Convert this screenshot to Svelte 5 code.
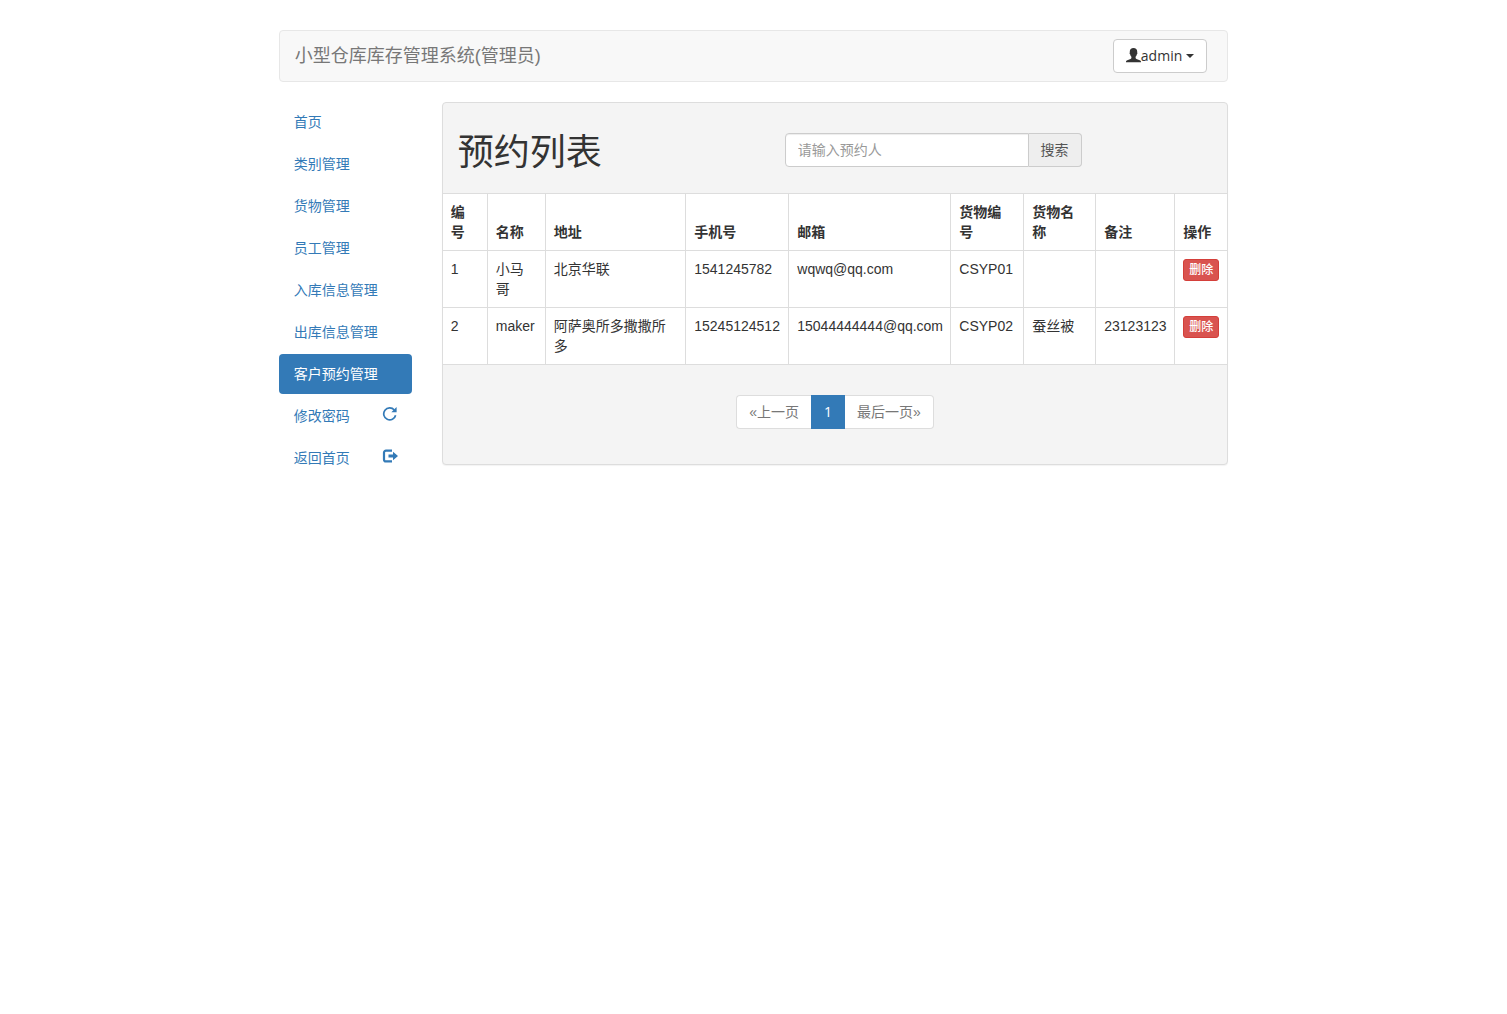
<script lang="ts">
	type Reservation = {
		id: number
		name: string
		address: string
		phone: string
		email: string
		goodsNo: string
		goodsName: string
		remark: string
	}

	const menu = [
		{ label: '首页' },
		{ label: '类别管理' },
		{ label: '货物管理' },
		{ label: '员工管理' },
		{ label: '入库信息管理' },
		{ label: '出库信息管理' },
		{ label: '客户预约管理', active: true },
		{ label: '修改密码', icon: 'refresh' },
		{ label: '返回首页', icon: 'logout' },
	]

	const columns = [
		{ key: 'id', title: '编号' },
		{ key: 'name', title: '名称' },
		{ key: 'address', title: '地址' },
		{ key: 'phone', title: '手机号' },
		{ key: 'email', title: '邮箱' },
		{ key: 'goods-no', title: '货物编号' },
		{ key: 'goods-name', title: '货物名称' },
		{ key: 'remark', title: '备注' },
		{ key: 'action', title: '操作' },
	]

	let rows = $state<Reservation[]>([
		{
			id: 1,
			name: '小马哥',
			address: '北京华联',
			phone: '1541245782',
			email: 'wqwq@qq.com',
			goodsNo: 'CSYP01',
			goodsName: '',
			remark: '',
		},
		{
			id: 2,
			name: 'maker',
			address: '阿萨奥所多撒撒所多',
			phone: '15245124512',
			email: '15044444444@qq.com',
			goodsNo: 'CSYP02',
			goodsName: '蚕丝被',
			remark: '23123123',
		},
	])
	let keyword = $state('')

	function remove(id: number) {
		rows = rows.filter((r) => r.id !== id)
	}
</script>

<div class="container">
	<header class="navbar">
		<span class="brand">小型仓库库存管理系统(管理员)</span>
		<button type="button" class="user-btn">
			<svg width="15" height="16" viewBox="0 0 15 16" aria-hidden="true">
				<path
					d="M7.500 0C5.200 0 3.800 1.300 3.800 3.500v1c-.4.4-.2 1.500.3 1.800.2 1.100.7 2 1.300 2.500v1c0 .6-.3.9-.9 1.200l-3.200 1.300C.4 12.700 0 13.100 0 13.800v.4h15v-.4c0-.7-.4-1.100-1.300-1.500L10.500 11c-.6-.3-.9-.6-.9-1.200v-1c.6-.5 1.100-1.400 1.300-2.500.5-.3.7-1.400.3-1.800v-1C11.200 1.300 9.800 0 7.500 0z"
				/>
			</svg>admin
			<span class="caret"></span>
		</button>
	</header>

	<div class="layout">
		<nav class="sidebar">
			{#each menu as item}
				<a href="#top" class:active={item.active}>
					{item.label}
					{#if item.icon === 'refresh'}
						<svg width="16" height="14" viewBox="0 0 16 14" aria-hidden="true">
							<path
								d="M12.300 3A6 6 0 1 0 13.600 8.200"
								fill="none"
								stroke="currentColor"
								stroke-width="1.700"
							/>
							<path d="M14.600 0v5.300H9.300z" />
						</svg>
					{:else if item.icon === 'logout'}
						<svg width="16" height="14" viewBox="0 0 16 14" aria-hidden="true">
							<path
								d="M10 1.600H4A2 2 0 0 0 2 3.600v6.800a2 2 0 0 0 2 2h6"
								fill="none"
								stroke="currentColor"
								stroke-width="2.200"
							/>
							<path d="M6.500 5.500H11V2.800L16 7l-5 4.200V8.500H6.500z" />
						</svg>
					{/if}
				</a>
			{/each}
		</nav>

		<main class="panel">
			<div class="panel-head">
				<h1>预约列表</h1>
				<form class="search" onsubmit={(e) => e.preventDefault()}>
					<input
						type="text"
						aria-label="预约人"
						placeholder="请输入预约人"
						bind:value={keyword}
					/>
					<button type="submit">搜索</button>
				</form>
			</div>

			<table>
				<colgroup>
					{#each columns as col}
						<col class="col-{col.key}" />
					{/each}
				</colgroup>
				<thead>
					<tr>
						{#each columns as col}
							<th scope="col">{col.title}</th>
						{/each}
					</tr>
				</thead>
				<tbody>
					{#each rows as row (row.id)}
						<tr>
							<td>{row.id}</td>
							<td>{row.name}</td>
							<td>{row.address}</td>
							<td>{row.phone}</td>
							<td>{row.email}</td>
							<td>{row.goodsNo}</td>
							<td>{row.goodsName}</td>
							<td>{row.remark}</td>
							<td>
								<button type="button" class="delete" onclick={() => remove(row.id)}>
									删除
								</button>
							</td>
						</tr>
					{/each}
				</tbody>
			</table>

			<div class="panel-foot">
				<nav class="pagination" aria-label="分页">
					<a href="#prev">«上一页</a>
					<a href="#page-1" class="current" aria-current="page">1</a>
					<a href="#next">最后一页»</a>
				</nav>
			</div>
		</main>
	</div>
</div>

<style>
	:global(body) {
		background: #fff;
		color: #333;
		font: 14px/20px 'Liberation Sans', 'Noto Sans CJK SC', sans-serif;
	}
	.container,
	.container * {
		box-sizing: border-box;
	}
	.container {
		width: 65%;
		margin: 0 auto;
		padding: 30px 15px 0;
	}
	a {
		color: #337ab7;
		text-decoration: none;
	}
	button,
	input {
		font: inherit;
	}
	button {
		cursor: pointer;
	}
	svg {
		fill: currentColor;
	}

	.navbar {
		display: flex;
		align-items: center;
		justify-content: space-between;
		height: 52px;
		margin-bottom: 20px;
		padding: 0 20px 0 15px;
		border: 1px solid #e7e7e7;
		border-radius: 4px;
		background: #f8f8f8;
	}
	.brand {
		color: #777;
		font-size: 18px;
	}
	.user-btn {
		display: flex;
		align-items: center;
		height: 34px;
		padding: 0 12px;
		border: 1px solid #ccc;
		border-radius: 4px;
		background: #fff;
		color: #333;
		font-family: 'Open Sans', sans-serif;
	}
	.caret {
		margin-left: 4px;
		border-top: 4px solid;
		border-right: 4px solid transparent;
		border-left: 4px solid transparent;
	}

	.layout {
		display: grid;
		grid-template-columns: minmax(0, 133fr) minmax(0, 786fr);
		align-items: start;
		gap: 30px;
	}
	.sidebar {
		display: flex;
		flex-direction: column;
		gap: 2px;
	}
	.sidebar a {
		display: flex;
		align-items: center;
		justify-content: space-between;
		height: 40px;
		padding: 0 14px 0 15px;
		border-radius: 4px;
	}
	.sidebar a.active {
		background: #337ab7;
		color: #fff;
	}
	.sidebar svg {
		margin-bottom: 4px;
	}

	.panel {
		border: 1px solid #ddd;
		border-radius: 4px;
		background: #f4f4f4;
		box-shadow: 0 1px 1px rgba(0, 0, 0, 0.05);
	}
	.panel-head {
		display: grid;
		grid-template-columns: 5fr 5fr 2fr;
		padding: 30px 0 20px;
	}
	h1 {
		margin: 0 15px;
		font-size: 36px;
		font-weight: 400;
		line-height: 40px;
	}
	.search {
		display: flex;
		height: 34px;
		margin: 0 15px;
	}
	.search input {
		flex: 1;
		min-width: 0;
		padding: 0 12px;
		border: 1px solid #ccc;
		border-radius: 4px 0 0 4px;
		background: #fff;
		box-shadow: inset 0 1px 1px rgba(0, 0, 0, 0.075);
	}
	.search input::placeholder {
		color: #999;
		opacity: 1;
	}
	.search button {
		padding: 0 12px;
		border: 1px solid #ccc;
		border-left: 0;
		border-radius: 0 4px 4px 0;
		background: #eee;
		color: #555;
	}

	table {
		width: 100%;
		table-layout: fixed;
		border-spacing: 0;
		background: #fff;
	}
	.col-id {
		width: 44px;
	}
	.col-name {
		width: 58px;
	}
	.col-phone {
		width: 103px;
	}
	.col-email {
		width: 162px;
	}
	.col-goods-no {
		width: 73px;
	}
	.col-goods-name {
		width: 72px;
	}
	.col-remark {
		width: 79px;
	}
	.col-action {
		width: 53px;
	}
	th,
	td {
		padding: 8px;
		border-top: 1px solid #ddd;
		text-align: left;
		vertical-align: top;
	}
	th {
		padding-right: 12px;
		vertical-align: bottom;
	}
	th + th,
	td + td {
		border-left: 1px solid #ddd;
	}
	.delete {
		display: block;
		height: 22px;
		padding: 0 5px;
		border: 1px solid #d43f3a;
		border-radius: 3px;
		background: #d9534f;
		color: #fff;
		font-size: 12px;
		font-weight: 500;
		line-height: 18px;
	}

	.panel-foot {
		display: flex;
		justify-content: center;
		padding: 30px 0 35px;
		border-top: 1px solid #ddd;
	}
	.pagination {
		display: flex;
	}
	.pagination a {
		height: 34px;
		padding: 6px 12px;
		border: 1px solid #ddd;
		background: #fff;
		color: #777;
	}
	.pagination a:first-child {
		border-right: 0;
		border-radius: 4px 0 0 4px;
	}
	.pagination a:last-child {
		border-left: 0;
		border-radius: 0 4px 4px 0;
	}
	.pagination .current {
		border-color: #337ab7;
		background: #337ab7;
		color: #fff;
		font-family: 'Open Sans', sans-serif;
	}
</style>
